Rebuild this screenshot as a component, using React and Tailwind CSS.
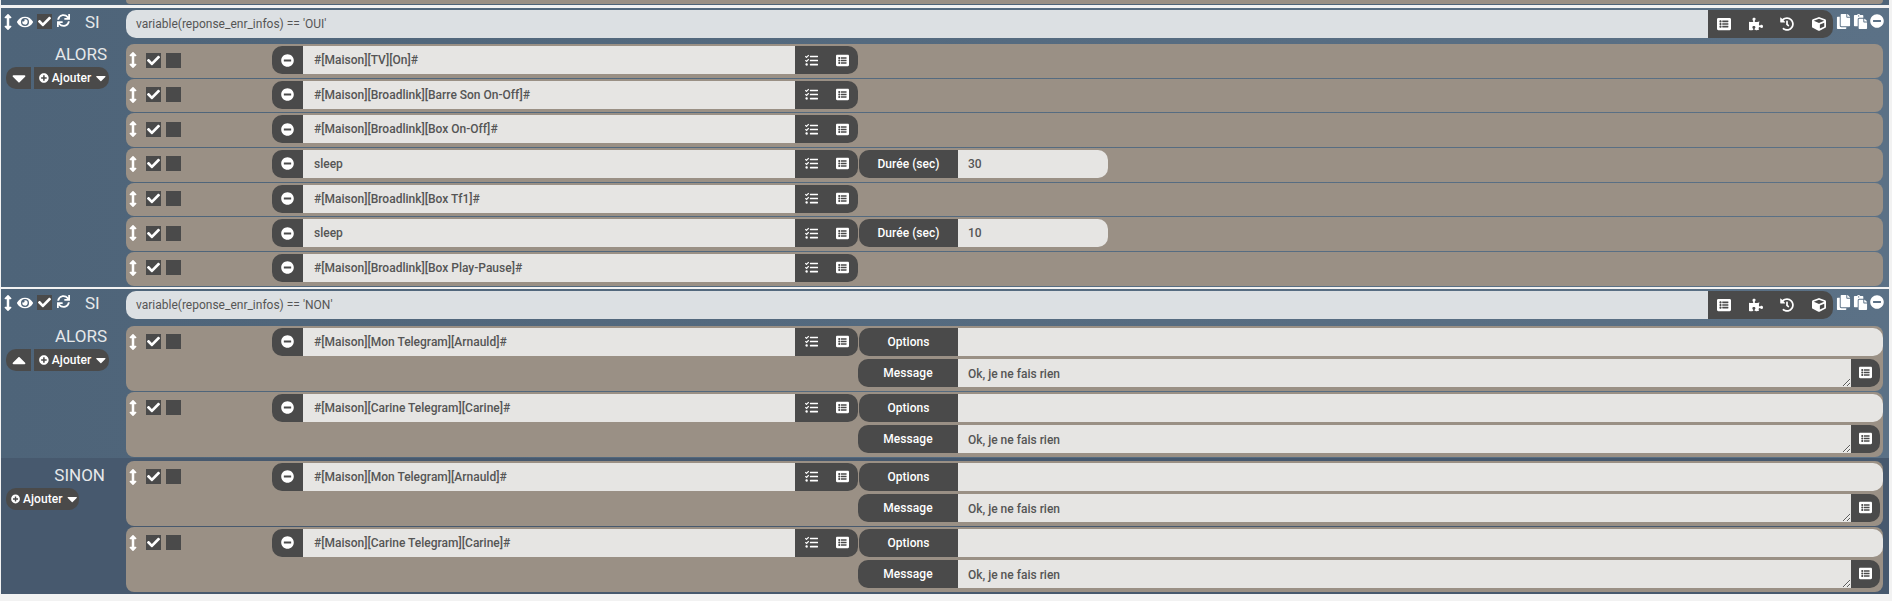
import { FaArrowsAltV, FaEye, FaCheck, FaSync, FaListAlt, FaPuzzlePiece, FaHistory, FaCube, FaCopy, FaPaste, FaMinusCircle, FaPlusCircle, FaTasks, FaCaretDown, FaCaretUp } from "react-icons/fa";

function Check() {
    return (
        <span className="relative block h-[15px] w-[15px] bg-[#4a4a4a]">
            <FaCheck className="absolute left-[1px] top-[1px] text-[13px] text-white" />
        </span>
    );
}

function Field({ children, className }) {
    return (
        <div className={"flex h-[28px] items-center text-[12px] text-[#555] " + className}>{children}</div>
    );
}

function Label({ children, className }) {
    return (
        <div className={"flex items-center justify-center bg-[#4a4a4a] text-[12px] font-medium tracking-[0.05px] text-white " + className}>{children}</div>
    );
}

function Base({ name, children }) {
    return (
        <div className="flex">
            <div className="flex h-[28px] w-[146px] items-center">
                <FaArrowsAltV className="ml-[3px] w-[8px] text-[16px] text-white" />
                <div className="ml-[9px] flex gap-[5px]">
                    <Check />
                    <span className="block h-[15px] w-[15px] bg-[#4a4a4a]" />
                </div>
            </div>
            <div className="flex h-[28px] w-[31px] items-center justify-center rounded-l-[10px] bg-[#4a4a4a]">
                <FaMinusCircle className="text-[13px] text-white" />
            </div>
            <Field className="w-[492px] bg-[#e6e5e3] pl-[11px] font-medium">{name}</Field>
            <div className="flex h-[28px] w-[63px] items-center gap-[18px] rounded-r-[10px] bg-[#4a4a4a] pl-[10px]">
                <FaTasks className="text-[13px] text-white" />
                <FaListAlt className="text-[13px] text-white" />
            </div>
            {children}
        </div>
    );
}

function Row({ name, sleep }) {
    return (
        <div className="mb-px h-[33.67px] rounded-lg bg-[#9a9085] pt-[2px]">
            <Base name={name}>
                {sleep && (
                    <div className="flex pl-px">
                        <Label className="w-[99px] rounded-l-[10px]">Durée (sec)</Label>
                        <Field className="w-[150px] rounded-r-[10px] bg-[#e6e5e3] pl-[10px] font-medium">{sleep}</Field>
                    </div>
                )}
            </Base>
        </div>
    );
}

function MessageRow({ name }) {
    return (
        <div className="mb-px h-[65px] rounded-lg bg-[#9a9085] pt-[2px]">
            <Base name={name}>
                <div className="flex flex-1 pl-px">
                    <Label className="w-[99px] rounded-l-[10px]">Options</Label>
                    <Field className="flex-1 rounded-r-[10px] bg-[#e6e5e3]" />
                </div>
            </Base>
            <div className="mt-[3.5px] flex h-[27.5px] pl-[732px] pr-[3px]">
                <Label className="w-[100px] rounded-l-[10px]">Message</Label>
                <textarea
                    readOnly
                    rows="1"
                    value="Ok, je ne fais rien"
                    className="h-[27.5px] flex-1 resize-y bg-[#e6e5e3] pl-[10px] pt-[6px] text-[12px] font-medium text-[#555] outline-none"
                />
                <div className="flex w-[29px] items-center justify-center rounded-r-[10px] bg-[#4a4a4a]">
                    <FaListAlt className="text-[13px] text-white" />
                </div>
            </div>
        </div>
    );
}

function Ajouter({ className }) {
    return (
        <div className={"flex h-[22px] items-center gap-[3px] bg-[#4a4a4a] pl-[5px] text-[12px] font-medium tracking-[0.05px] text-white " + className}>
            <FaPlusCircle className="text-[10px]" />
            Ajouter
            <FaCaretDown className="-ml-[1px] text-[16px]" />
        </div>
    );
}

function Condition({ text, children }) {
    return (
        <div className="bg-gradient-to-r from-[#4e6479] to-[#5b7186] pt-[2px]">
            <div className="flex h-[28px]">
                <div className="flex w-[125px] pl-[3px] pt-[4px] text-white">
                    <FaArrowsAltV className="w-[8px] text-[16px]" />
                    <FaEye className="ml-[5px] text-[16px]" />
                    <span className="ml-[4px]"><Check /></span>
                    <FaSync className="ml-[5px] text-[13px]" />
                    <span className="-mt-[4px] ml-[15px] text-[17px] leading-[24px] text-[#e6e8ea]">SI</span>
                </div>
                <Field className="flex-1 rounded-l-[10px] bg-[#dce0e3] pl-[10px]">{text}</Field>
                <div className="flex w-[125px] items-center gap-[17.5px] rounded-r-[10px] bg-[#4a4a4a] pl-[9px] text-[14px] text-white">
                    <FaListAlt />
                    <FaPuzzlePiece />
                    <FaHistory />
                    <FaCube />
                </div>
                <div className="flex w-[56px] items-start gap-[2px] pl-[3px] pt-[4px] text-white">
                    <FaCopy className="text-[15px]" />
                    <FaPaste className="text-[15px]" />
                    <FaMinusCircle className="text-[14px]" />
                </div>
            </div>
            {children}
        </div>
    );
}

function Section({ title, toggle, className, children }) {
    return (
        <div className={"flex pr-[6px] " + className}>
            <div className="w-[125px] shrink-0 pl-[5px]">
                {toggle ? (
                    <>
                        <div className="-mt-[2px] pr-[19px] text-right text-[17px] leading-[24px] text-[#e6e8ea]">{title}</div>
                        <div className="mt-[1px] flex gap-[3px]">
                            <div className="flex h-[22px] w-[25px] items-center justify-center rounded-l-[10px] bg-[#4a4a4a] text-[22px] text-white">
                                {toggle === "down" ? <FaCaretDown /> : <FaCaretUp />}
                            </div>
                            <Ajouter className="w-[75px] rounded-r-[10px]" />
                        </div>
                    </>
                ) : (
                    <>
                        <div className="mt-[2px] pr-[21px] text-right text-[17px] leading-[24px] text-[#e6e8ea]">{title}</div>
                        <Ajouter className="mt-[1px] w-[73px] rounded-[10px]" />
                    </>
                )}
            </div>
            <div className="flex-1">{children}</div>
        </div>
    );
}

export default function App() {
    return (
        <div className="h-[601px] overflow-hidden bg-[#f2f2f2] pl-px pr-[3px] [font-family:Roboto,sans-serif]">
            <div className="flex h-[5px] bg-[#4e6479] pr-[6px]">
                <div className="w-[125px]" />
                <div className="mb-px flex-1 rounded-b-lg bg-[#9a9085]" />
            </div>
            <div className="h-[3px]" />
            <Condition text="variable(reponse_enr_infos) == 'OUI'">
                <Section title="ALORS" toggle="down" className="mt-[6px]">
                    <Row name="#[Maison][TV][On]#" />
                    <Row name="#[Maison][Broadlink][Barre Son On-Off]#" />
                    <Row name="#[Maison][Broadlink][Box On-Off]#" />
                    <Row name="sleep" sleep="30" />
                    <Row name="#[Maison][Broadlink][Box Tf1]#" />
                    <Row name="sleep" sleep="10" />
                    <Row name="#[Maison][Broadlink][Box Play-Pause]#" />
                </Section>
            </Condition>
            <div className="h-[2px]" />
            <Condition text="variable(reponse_enr_infos) == 'NON'">
                <Section title="ALORS" toggle="up" className="mt-[7px]">
                    <MessageRow name="#[Maison][Mon Telegram][Arnauld]#" />
                    <MessageRow name="#[Maison][Carine Telegram][Carine]#" />
                </Section>
                <Section title="SINON" className="bg-[#47596e] pb-[1px] pt-[3px]">
                    <MessageRow name="#[Maison][Mon Telegram][Arnauld]#" />
                    <MessageRow name="#[Maison][Carine Telegram][Carine]#" />
                </Section>
            </Condition>
        </div>
    );
}
